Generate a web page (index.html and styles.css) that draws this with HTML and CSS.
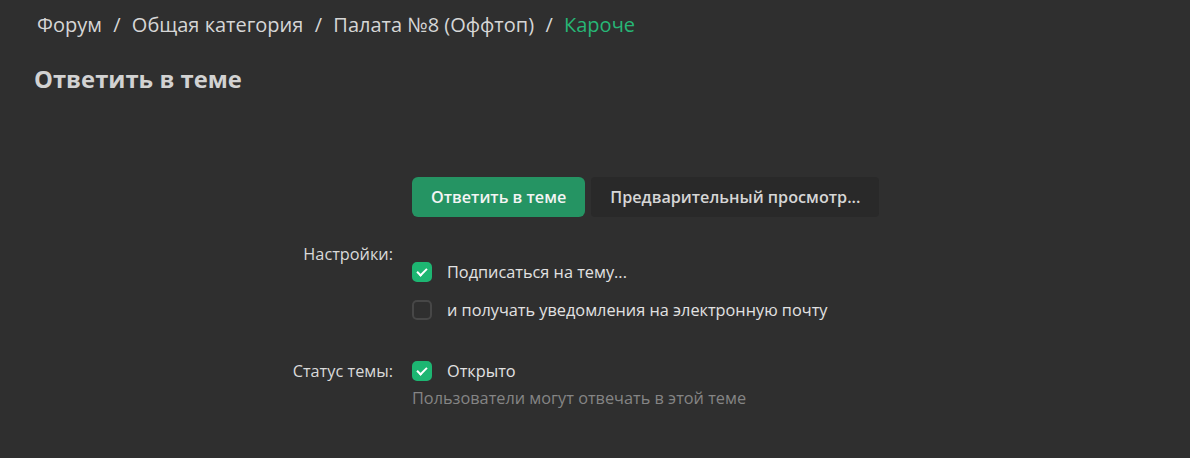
FILE: index.html
```html
<!DOCTYPE html>
<html lang="ru">
<head>
    <meta charset="UTF-8">
    <title>Ответить в теме</title>
    <link rel="stylesheet" href="styles.css">
</head>
<body>
    <nav class="breadcrumbs">
        <a href="#">Форум</a>
        <span class="sep">/</span>
        <a href="#">Общая категория</a>
        <span class="sep">/</span>
        <a href="#">Палата №8 (Оффтоп)</a>
        <span class="sep">/</span>
        <a href="#" class="current">Кароче</a>
    </nav>

    <h1 class="page-title">Ответить в теме</h1>

    <form class="reply-form">
        <div class="form-row">
            <div class="form-label"></div>
            <div class="form-buttons">
                <button type="submit" class="button button-primary">Ответить в теме</button>
                <button type="button" class="button button-secondary">Предварительный просмотр...</button>
            </div>
        </div>

        <div class="form-row row-options">
            <div class="form-label">Настройки:</div>
            <ul class="check-list">
                <li>
                    <label class="check">
                        <input type="checkbox" checked>
                        <span class="check-box"></span>
                        <span>Подписаться на тему...</span>
                    </label>
                </li>
                <li>
                    <label class="check">
                        <input type="checkbox">
                        <span class="check-box"></span>
                        <span>и получать уведомления на электронную почту</span>
                    </label>
                </li>
            </ul>
        </div>

        <div class="form-row row-status">
            <div class="form-label">Статус темы:</div>
            <ul class="check-list">
                <li>
                    <label class="check">
                        <input type="checkbox" checked>
                        <span class="check-box"></span>
                        <span>Открыто</span>
                    </label>
                    <p class="hint">Пользователи могут отвечать в этой теме</p>
                </li>
            </ul>
        </div>
    </form>
</body>
</html>
```

FILE: styles.css
```css
body {
    margin: 0;
    padding: 0;
    background-color: #2f2f2f;
    color: #dedede;
    font-family: 'Open Sans', 'Noto Sans', sans-serif;
}
.breadcrumbs {
    display: flex;
    align-items: center;
    gap: 11.3px;
    padding: 10px 0 0 37px;
    font-size: 20px;
    line-height: 30px;
}
.breadcrumbs a {
    color: #d6d6d6;
    text-decoration: none;
}
.breadcrumbs .sep {
    color: #d6d6d6;
}
.breadcrumbs .current {
    color: #27b676;
}
.page-title {
    margin: 22px 0 0 34px;
    font-size: 23.8px;
    font-weight: 700;
    line-height: 34px;
    color: #d2d2d2;
}
.reply-form {
    padding-top: 81px;
}
.form-row {
    display: grid;
    grid-template-columns: 393px 1fr;
    column-gap: 19px;
}
.form-label {
    text-align: right;
    font-size: 16.3px;
    line-height: 24px;
    color: #dadada;
}
.form-buttons {
    display: flex;
    gap: 6px;
}
.button {
    height: 40px;
    padding: 0 19px;
    border: none;
    border-radius: 6px;
    font-family: inherit;
    font-size: 16.2px;
    font-weight: 600;
    cursor: pointer;
}
.button-primary {
    background-color: #259463;
    color: #f4f4f4;
}
.button-secondary {
    background-color: #292929;
    color: #d6d6d6;
    border-radius: 4px;
}
.row-options {
    margin-top: 25px;
}
.row-options .check-list {
    padding-top: 18px;
}
.row-status {
    margin-top: 37px;
}
.check-list {
    list-style: none;
    margin: 0;
    padding: 0;
    display: flex;
    flex-direction: column;
    gap: 14px;
}
.check {
    display: flex;
    align-items: center;
    gap: 15px;
    font-size: 16.3px;
    line-height: 24px;
    color: #e2e2e2;
    cursor: pointer;
}
.check input {
    display: none;
}
.check-box {
    width: 20px;
    height: 20px;
    box-sizing: border-box;
    border: 2px solid #474747;
    border-radius: 5px;
    position: relative;
}
.check input:checked + .check-box {
    background-color: #1db672;
    border-color: #1db672;
}
.check input:checked + .check-box::after {
    content: '';
    position: absolute;
    left: 5px;
    top: 2px;
    width: 4px;
    height: 8px;
    border: solid #ffffff;
    border-width: 0 2px 2px 0;
    transform: rotate(45deg);
}
.hint {
    margin: 4px 0 0 0;
    font-size: 16.3px;
    line-height: 22px;
    color: #858585;
}
```
